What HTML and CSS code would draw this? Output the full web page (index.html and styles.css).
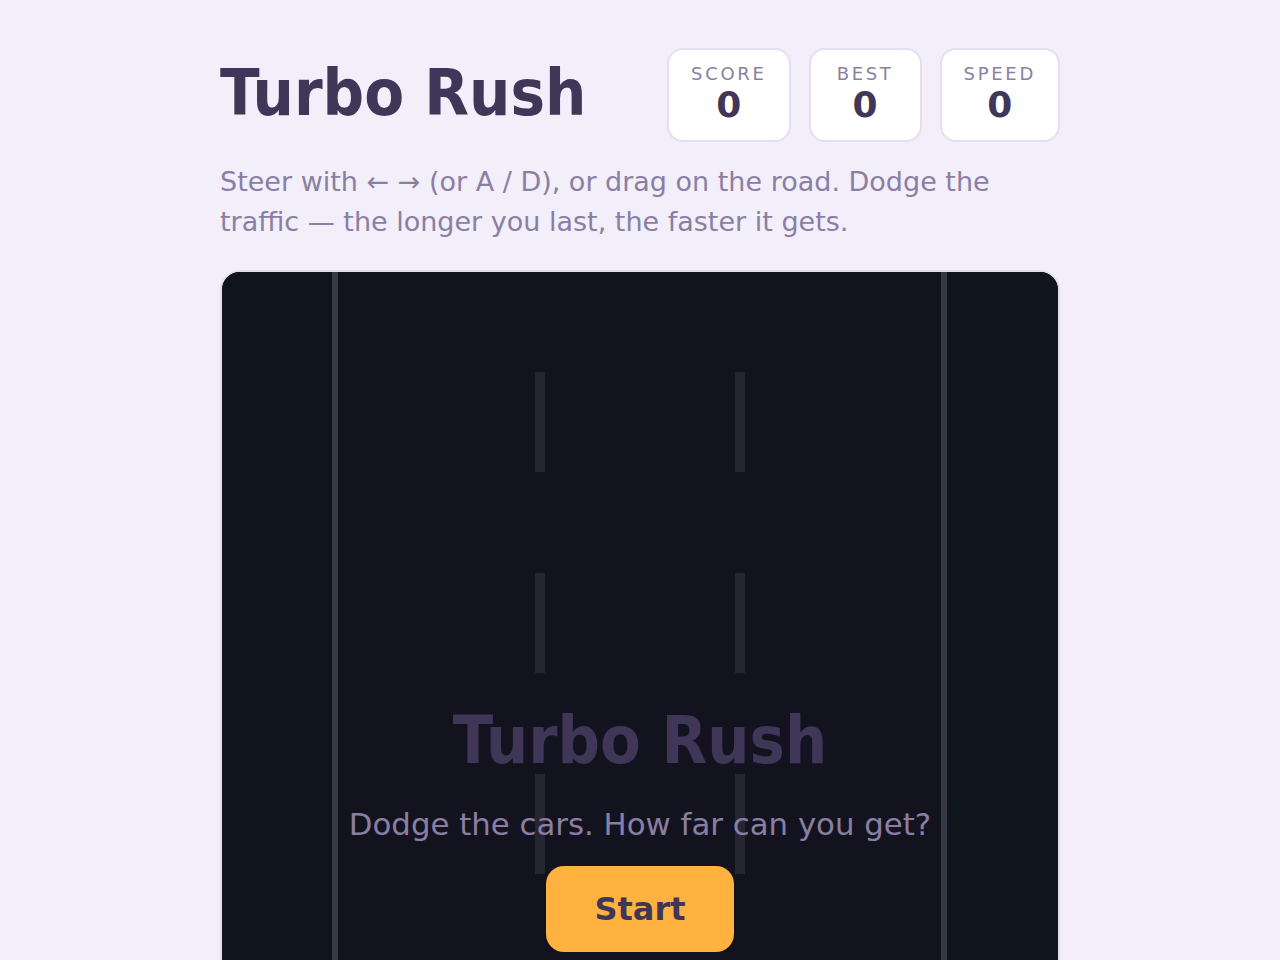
FILE: index.html
```html
<!DOCTYPE html>
<html lang="en">
<head>
<meta charset="utf-8">
<title>Turbo Rush</title>
<link rel="stylesheet" href="styles.css">
</head>
<body>
<main class="app">
  <header class="top">
    <h1 class="title">Turbo Rush</h1>
    <div class="stats">
      <div class="stat"><span class="stat-label">Score</span><span class="stat-value">0</span></div>
      <div class="stat"><span class="stat-label">Best</span><span class="stat-value">0</span></div>
      <div class="stat"><span class="stat-label">Speed</span><span class="stat-value">0</span></div>
    </div>
  </header>
  <p class="help">Steer with ← → (or A / D), or drag on the road. Dodge the traffic — the longer you last, the faster it gets.</p>
  <section class="board">
    <div class="shoulder"></div>
    <div class="edge"></div>
    <div class="road"></div>
    <div class="edge"></div>
    <div class="shoulder shoulder-right"></div>
    <div class="overlay">
      <h2 class="overlay-title">Turbo Rush</h2>
      <p class="overlay-sub">Dodge the cars. How far can you get?</p>
      <button class="start" type="button">Start</button>
    </div>
  </section>
</main>
</body>
</html>
```
FILE: styles.css
```css
* { box-sizing: border-box; }
html, body { margin: 0; padding: 0; }
body {
  background: #f2eefa;
  font-family: "DejaVu Sans", Verdana, sans-serif;
  color: #3f3658;
}
.app {
  width: 840px;
  margin: 0 auto;
  padding-top: 48px;
}
.top {
  display: flex;
  align-items: center;
  justify-content: space-between;
}
.title {
  margin: 0 0 4px;
  font-family: "DejaVu Sans Condensed", "DejaVu Sans", sans-serif;
  font-stretch: condensed;
  font-size: 64.6px;
  font-weight: bold;
  line-height: 1;
  color: #3f3658;
}
.stats {
  display: flex;
  gap: 18px;
}
.stat {
  background: #fff;
  border: 2px solid #e4def0;
  border-radius: 16px;
  padding: 12px 22px 16px 22px;
  min-width: 113px;
  display: flex;
  flex-direction: column;
  align-items: center;
}
.stat-label {
  font-size: 18px;
  text-transform: uppercase;
  letter-spacing: 2.7px;
  color: #8a7fa3;
  line-height: 24px;
}
.stat-value {
  font-size: 36px;
  font-weight: bold;
  line-height: 38px;
  color: #3f3658;
}
.help {
  margin: 20px 0 28px;
  font-size: 27px;
  line-height: 40px;
  color: #8a7fa3;
}
.board {
  position: relative;
  display: flex;
  height: 1000px;
  border: 2px solid #e4def0;
  border-radius: 20px;
  overflow: hidden;
  background: #10141c;
}
.shoulder {
  width: 110px;
  background: #10141c;
}
.shoulder-right { width: 111px; }
.edge {
  width: 6px;
  background: #383846;
}
.road {
  flex: 1;
  background-color: #13131f;
  background-image:
    repeating-linear-gradient(to bottom, transparent 0 100px, #262633 100px 200px, transparent 200px 201px),
    repeating-linear-gradient(to bottom, transparent 0 100px, #262633 100px 200px, transparent 200px 201px);
  background-size: 10px 100%, 10px 100%;
  background-position: 197px 0, 397px 0;
  background-repeat: no-repeat;
}
.overlay {
  position: absolute;
  inset: 0;
  display: flex;
  flex-direction: column;
  align-items: center;
  padding-top: 437px;
}
.overlay-title {
  margin: 0;
  font-family: "DejaVu Sans Condensed", "DejaVu Sans", sans-serif;
  font-stretch: condensed;
  font-size: 66px;
  font-weight: bold;
  line-height: 64px;
  color: #3f3658;
}
.overlay-sub {
  margin: 33px 0 24px;
  font-size: 30.8px;
  line-height: 36px;
  color: #8a7fa3;
}
.start {
  width: 188px;
  height: 86px;
  border: none;
  border-radius: 18px;
  background: #ffb23f;
  font-family: "DejaVu Sans", Verdana, sans-serif;
  font-weight: bold;
  font-size: 32px;
  color: #3f3658;
}
```
